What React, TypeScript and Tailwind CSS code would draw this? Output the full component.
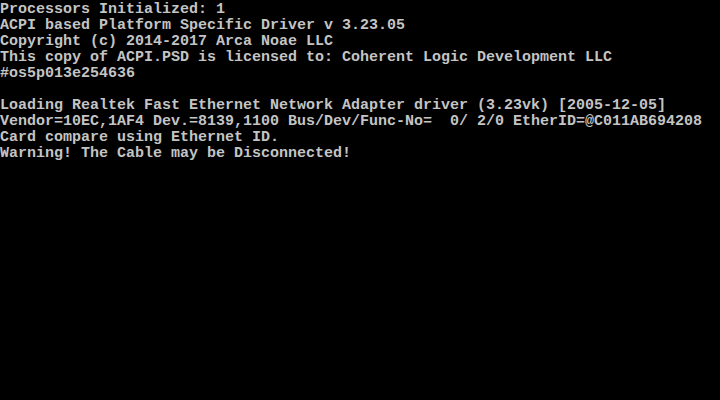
const lines = [
  "Processors Initialized: 1",
  "ACPI based Platform Specific Driver v 3.23.05",
  "Copyright (c) 2014-2017 Arca Noae LLC",
  "This copy of ACPI.PSD is licensed to: Coherent Logic Development LLC",
  "#os5p013e254636",
  "",
  "Loading Realtek Fast Ethernet Network Adapter driver (3.23vk) [2005-12-05]",
  "Vendor=10EC,1AF4 Dev.=8139,1100 Bus/Dev/Func-No=  0/ 2/0 EtherID=@C011AB694208",
  "Card compare using Ethernet ID.",
  "Warning! The Cable may be Disconnected!",
];

const App = () => {
  return (
    <div className="w-[720px] h-[400px] bg-black overflow-hidden pt-[2px]">
      <div className="flex flex-col font-['Liberation_Mono',monospace] text-[15px] leading-[16px] text-[#c4c4c4] font-bold">
        {lines.map((line, index) => (
          <div key={index} className="h-[16px] whitespace-pre">
            {line}
          </div>
        ))}
      </div>
    </div>
  );
};

export default App;
